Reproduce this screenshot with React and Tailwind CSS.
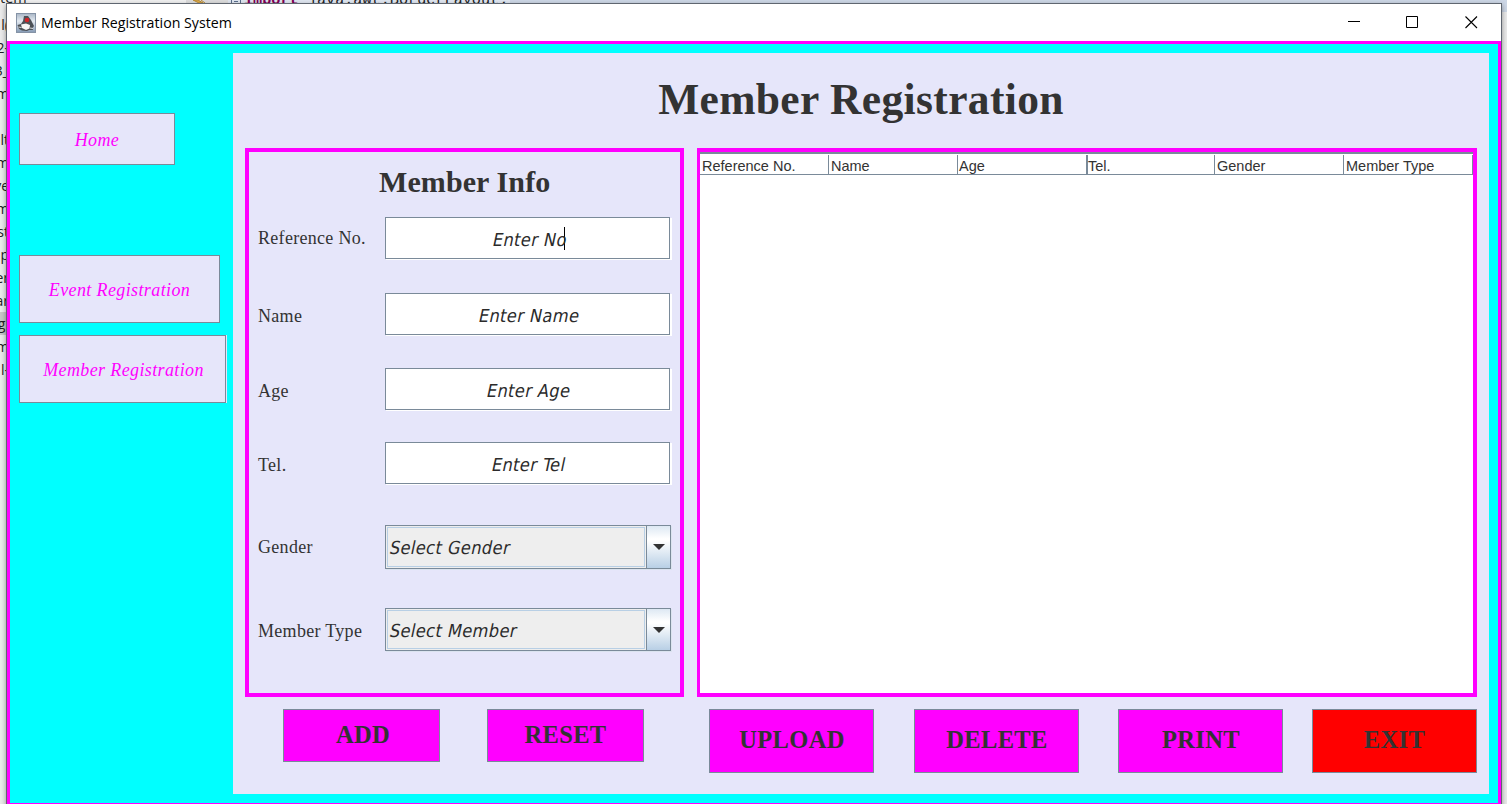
import React from 'react';

const sideFont = "font-['Liberation_Serif',serif] italic text-[18px] tracking-[0.38px] leading-none text-[#ff00ff]";
const inputFont = "font-['DejaVu_Sans_Condensed','DejaVu_Sans',sans-serif] text-[18px] tracking-[0.42px] leading-none text-[#2b2b2b]";

function SideButton({ className, children }) {
  return (
    <button className={`${sideFont} flex items-center justify-center border border-[#7a8a99] bg-[#e6e6fa] ${className}`}>
      {children}
    </button>
  );
}

function Label({ className = '', children }) {
  return (
    <span className={`w-[127px] whitespace-nowrap font-['Liberation_Serif',serif] text-[18px] leading-[20px] tracking-[0.3px] text-[#333] ${className}`}>
      {children}
    </span>
  );
}

function Field({ label, value, className, labelClass, caret }) {
  return (
    <div className={`flex h-[42px] items-center ${className}`}>
      <Label className={labelClass}>{label}</Label>
      <div className="flex h-[42px] w-[285px] items-center justify-center border border-[#7a8a99] bg-white shadow-[1px_1px_0_#ffffff,2px_1px_0_#ffffff]">
        <span className={`${inputFont} mt-[3px] ml-[3px] -skew-x-12 whitespace-pre`}>{value}</span>
        {caret && <i className="-ml-[2px] h-[23px] w-px bg-black" />}
      </div>
    </div>
  );
}

function Select({ label, value, className, labelClass }) {
  return (
    <div className={`flex items-center ${className}`}>
      <Label className={labelClass}>{label}</Label>
      <div className="flex h-full w-[286px] border border-[#7a8a99] bg-[#eee] shadow-[1px_1px_0_#dbe3ef]">
        <div className="m-px flex flex-1 items-center border border-[#b8cfe5] pl-[2px]">
          <span className={`${inputFont} mt-[2px] -skew-x-12 whitespace-pre`}>{value}</span>
        </div>
        <div className="flex w-[24px] items-center justify-center border-l border-[#7a8a99] bg-[linear-gradient(#dde8f3_0%,#ffffff_30%,#ffffff_35%,#b8cfe5_100%)]">
          <svg width="12" height="6" viewBox="0 0 12 6"><path d="M0 0H12L6 6Z" fill="#333" /></svg>
        </div>
      </div>
    </div>
  );
}

function Action({ className, children }) {
  return (
    <button className={`flex items-center justify-center border border-[#7a8a99] font-['Liberation_Serif',serif] text-[24.5px] font-bold leading-none tracking-[0.35px] text-[#333] ${className}`}>
      {children}
    </button>
  );
}

const behind = [
  ['l(', 13], ['2-', 36], ['3_', 59], ['m', 82], ['ult', 128], ['m', 151], ['ve', 174], ['m', 197],
  ['st', 220], ['p', 243], ['er', 266], ['ar', 289], ['gi', 312], ['m', 335], ['l-', 358],
];

const columns = [
  ['Reference No.', 'w-[129px] pl-[2px]'], ['Name', 'w-[129px] pl-[2px]'], ['Age', 'w-[129px] pl-px'],
  ['Tel.', 'w-[128px] border-l pl-0'], ['Gender', 'w-[129px] pl-[2px]'], ['Member Type', 'w-[129px] pl-[2px]'],
];

function EditorBehind() {
  return (
    <div className="absolute inset-0 overflow-hidden bg-[#eaeaea] text-[#222]">
      <div className="absolute left-0 top-0 h-[3px] w-[186px] bg-[#f0f0f0]" />
      <div className="absolute left-[186px] top-0 h-[3px] w-[42px] bg-[#dcdcdc]" />
      <div className="absolute left-[228px] top-0 h-[3px] w-[282px] bg-[#dfe6f0]" />
      <div className="absolute left-[510px] top-0 h-[12px] w-[997px] bg-[#cdd7e6]" />
      <span className="absolute left-0 top-[-12px] font-['Open_Sans',sans-serif] text-[14.5px] leading-[20px]">tem</span>
      <svg className="absolute left-[231px] top-0" width="10" height="3"><path d="M.5 0V3M9.5 0V3M3 1.5H7" stroke="#5a6e8c" fill="none" /></svg>
      <span className="absolute left-[244px] top-[-9px] whitespace-pre font-['Liberation_Mono',monospace] text-[15.2px] leading-[18px]">
        <b className="text-[#7f0055]">import</b> java.awt.BorderLayout;
      </span>
      <svg className="absolute left-[192px] top-0" width="14" height="3"><path d="M1 0H6L11 3H7ZM9 0L13 3" fill="#e0b050" stroke="#b88830" /></svg>
      <div className="absolute left-0 top-[312px] h-[23px] w-[7px] bg-[#c6c6c6]" />
      {behind.map(([t, y]) => (
        <span key={y} className="absolute right-[1498px] font-['Open_Sans',sans-serif] text-[14px] leading-[24px]" style={{ top: y }}>{t}</span>
      ))}
    </div>
  );
}

function JavaIcon() {
  return (
    <svg width="20" height="20" viewBox="0 0 20 20">
      <defs>
        <linearGradient id="duke" x1="0" y1="0" x2="0" y2="1">
          <stop offset="0" stopColor="#a9b6c6" /><stop offset=".4" stopColor="#e4eaf1" /><stop offset="1" stopColor="#8499b4" />
        </linearGradient>
      </defs>
      <rect x=".5" y=".5" width="19" height="19" fill="url(#duke)" stroke="#8593a6" />
      <path d="M8 3L12 3L15 7L18 13L16.5 15L17 17L13 17L11 18L6 17.5L3 16L1.5 12L5 11L7 8Z" fill="#4c5157" />
      <path d="M5 11.5L10 10.5L14 12L13.5 15.5L10 17L6 15Z" fill="#f7f7f7" />
      <path d="M2.5 14L5.5 14.5M14 15L17 15.5" stroke="#ddd" />
      <circle cx="11" cy="7" r="2.3" fill="#d0252a" />
    </svg>
  );
}

export default function App() {
  return (
    <div className="relative h-[804px] w-[1507px] overflow-hidden pl-[6px] pt-[3px]">
      <EditorBehind />
      <div className="relative flex h-[820px] w-[1496px] flex-col border border-[#5f6670] bg-white shadow-[0_2px_5px_rgba(0,0,0,0.4)]">
        <header className="flex h-[37px] shrink-0 items-center pl-[9px]">
          <JavaIcon />
          <span className="ml-[5px] mt-px whitespace-nowrap font-['Open_Sans',sans-serif] text-[14.2px] leading-none text-black">Member Registration System</span>
          <div className="ml-auto mr-[23px] flex items-center">
            <svg width="13" height="13"><path d="M0 5.5H12" stroke="#000" /></svg>
            <svg className="ml-[45px]" width="13" height="13"><path d="M.5.5H11.5V11.5H.5Z" fill="none" stroke="#000" /></svg>
            <svg className="ml-[46px]" width="13" height="13"><path d="M.5.5L12 12M12 .5L.5 12" stroke="#000" strokeWidth="1.1" /></svg>
          </div>
        </header>
        <div className="flex h-[763px] shrink-0 border-[3px] border-b-[1px] border-[#ff00ff] bg-[#00ffff]">
          <nav className="flex w-[223px] shrink-0 flex-col pl-[9px] pt-[69px]">
            <SideButton className="h-[52px] w-[156px] pt-px">Home</SideButton>
            <SideButton className="mt-[90px] h-[68px] w-[201px] pt-px">Event Registration</SideButton>
            <SideButton className="mt-[12px] h-[68px] w-[207px] pl-[2px] pt-px shadow-[1px_0_0_#e6e6fa]">Member Registration</SideButton>
          </nav>
          <main className="mt-[9px] h-[741px] w-[1256px] bg-[#e6e6fa] pl-[12px]">
            <h1 className="flex h-[95px] items-center justify-center pb-px pr-[12px] font-['Liberation_Serif',serif] text-[43.5px] font-bold leading-none tracking-[0.35px] text-[#333]">
              Member Registration
            </h1>
            <div className="flex h-[549px] gap-[13px]">
              <section className="w-[439px] border-4 border-[#ff00ff] pl-[9px]">
                <h2 className="mt-[15px] h-[30px] pl-[121px] font-['Liberation_Serif',serif] text-[30px] font-bold leading-[30px] tracking-[0.1px] text-[#333]">Member Info</h2>
                <Field label="Reference No." value="Enter No" className="mt-[20px]" caret />
                <Field label="Name" value="Enter Name" className="mt-[34px]" labelClass="pt-[4px]" />
                <Field label="Age" value="Enter Age" className="mt-[33px]" labelClass="pt-[4px]" />
                <Field label="Tel." value="Enter Tel" className="mt-[32px]" labelClass="pt-[4px]" />
                <Select label="Gender" value="Select Gender" className="mt-[41px] h-[44px]" />
                <Select label="Member Type" value="Select Member" className="mt-[39px] h-[43px]" labelClass="pt-[2px]" />
              </section>
              <section className="w-[780px] border-4 border-l-[3px] border-[#ff00ff] bg-white">
                <div className="flex h-[23px] border-b border-t-2 border-[#7a8a99] pt-px">
                  {columns.map(([name, w]) => (
                    <div key={name} className={`${w} shrink-0 whitespace-nowrap border-r border-[#7a8a99] font-['Liberation_Sans',sans-serif] text-[14.5px] leading-[22px] text-[#333]`}>{name}</div>
                  ))}
                </div>
              </section>
            </div>
            <div className="mt-[12px] flex items-start pl-[38px]">
              <Action className="h-[53px] w-[157px] bg-[#ff00ff] pl-[3px]">ADD</Action>
              <Action className="ml-[47px] h-[53px] w-[157px] bg-[#ff00ff]">RESET</Action>
              <Action className="ml-[65px] h-[64px] w-[165px] bg-[#ff00ff] pb-[2px] pl-px">UPLOAD</Action>
              <Action className="ml-[40px] h-[64px] w-[165px] bg-[#ff00ff] pb-[2px] pl-px">DELETE</Action>
              <Action className="ml-[39px] h-[64px] w-[165px] bg-[#ff00ff] pb-[2px] pl-px">PRINT</Action>
              <Action className="ml-[29px] h-[64px] w-[165px] bg-[#ff0000] pb-[2px]">EXIT</Action>
            </div>
          </main>
        </div>
      </div>
    </div>
  );
}
